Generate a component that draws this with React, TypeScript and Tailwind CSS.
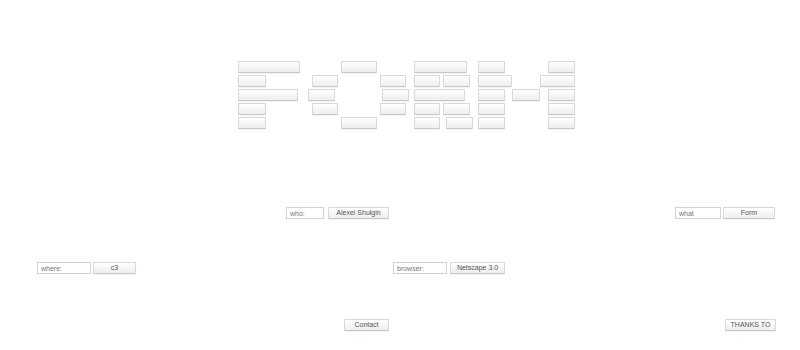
import React from "react";

type Row = [number, number][];

// absolute x ranges of each button in the big "FORM" lettering, row by row
const letterRows: Row[] = [
  [[238, 300], [341, 377], [414, 467], [478, 505], [548, 575]],
  [[238, 266], [312, 338], [380, 406], [414, 440], [443, 470], [478, 512], [540, 575]],
  [[238, 298], [308, 335], [382, 409], [414, 465], [478, 505], [512, 540], [548, 575]],
  [[238, 266], [312, 338], [380, 406], [414, 440], [443, 470], [478, 505], [548, 575]],
  [[238, 266], [341, 377], [414, 440], [446, 473], [478, 505], [548, 575]],
];

const btn =
  "h-[12px] shrink-0 rounded-[1px] border border-[#d8d8d8] border-b-[#c8c8c8] bg-linear-to-b from-white to-[#eeeeee] p-0 text-center text-[7px] leading-[10px] text-[#555] antialiased shadow-[0_1px_1px_rgba(0,0,0,0.05)]";

const field =
  "h-[12px] shrink-0 border border-[#d2d2d2] bg-white p-0 pl-[3px] text-[7px] leading-[10px] text-[#777] antialiased outline-none";

const Field = ({ value, className }: { value: string; className: string }) => (
  <input readOnly value={value} className={`${field} ${className}`} />
);

const Btn = ({ label, className }: { label: string; className: string }) => (
  <button className={`${btn} ${className}`}>{label}</button>
);

export default function App() {
  return (
    <div
      className="w-[800px] h-[350px] bg-white pt-[61px] overflow-hidden"
      style={{ fontFamily: '"Liberation Sans", Arial, sans-serif' }}
    >
      <div className="flex flex-col gap-[2px]">
        {letterRows.map((row, i) => (
          <div key={i} className="flex h-[12px]">
            {row.map(([x1, x2], j) => {
              const prev = j === 0 ? 0 : row[j - 1][1];
              return (
                <button
                  key={j}
                  className={btn}
                  style={{ marginLeft: x1 - prev, width: x2 - x1 }}
                />
              );
            })}
          </div>
        ))}
      </div>

      <div className="mt-[78px] flex h-[12px]">
        <Field value="who:" className="ml-[286px] w-[38px]" />
        <Btn label="Alexei Shulgin" className="ml-[4px] w-[61px]" />
        <Field value="what" className="ml-[286px] w-[46px]" />
        <Btn label="Form" className="ml-[2px] w-[52px]" />
      </div>

      <div className="mt-[43px] flex h-[12px]">
        <Field value="where:" className="ml-[37px] w-[54px]" />
        <Btn label="c3" className="ml-[2px] w-[43px]" />
        <Field value="browser:" className="ml-[257px] w-[54px]" />
        <Btn label="Netscape 3.0" className="ml-[3px] w-[55px]" />
      </div>

      <div className="mt-[45px] flex h-[12px]">
        <Btn label="Contact" className="ml-[344px] w-[45px]" />
        <Btn label="THANKS TO" className="ml-[336px] w-[51px]" />
      </div>
    </div>
  );
}
